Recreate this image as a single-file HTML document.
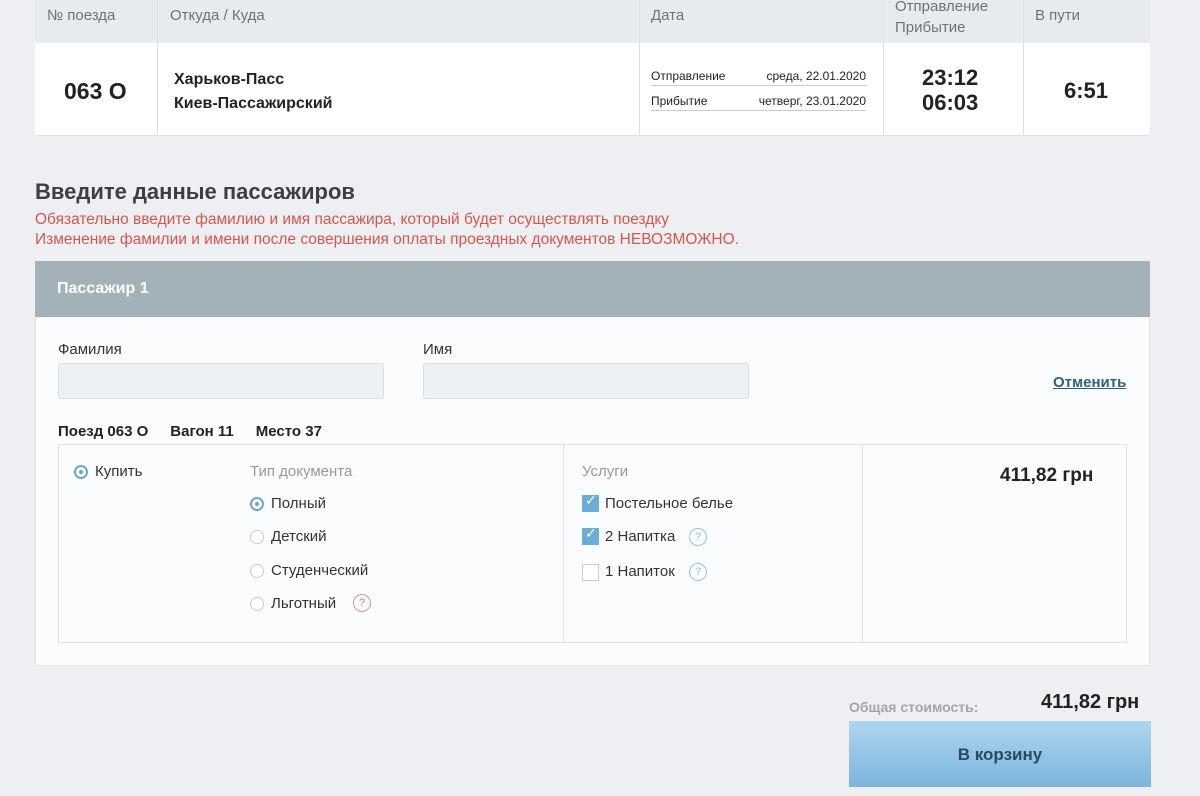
<!DOCTYPE html>
<html><head><meta charset="utf-8"><style>
*{margin:0;padding:0;box-sizing:border-box}
body{width:1200px;height:796px;background:#edeff2;font-family:"Liberation Sans",sans-serif;position:relative;overflow:hidden;color:#222}
.a{position:absolute;white-space:nowrap}
.hd{color:#6c7378;font-size:15px}
.b{font-weight:bold}
.rad{position:absolute;width:14px;height:14px;border-radius:50%;border:1.5px solid #c8cdd0;background:#fff}
.rad.on{border:2px solid #6aa7c9}
.rad.on::after{content:"";position:absolute;left:3px;top:3px;width:4px;height:4px;border-radius:50%;background:#6aa7c9}
.chk{position:absolute;width:17px;height:17px;background:#6aaed6}
.chk.off{background:#fff;border:1.5px solid #c8cdd0}
.q{position:absolute;width:18px;height:18px;border-radius:50%;border:1px solid #8fc6df;color:#8fc6df;font-size:11px;text-align:center;line-height:16px}
.t{font-size:15px;color:#333}
</style></head><body>
<div class="a" style="left:35px;top:0;width:1115px;height:43px;background:#e8ebee"></div>
<div class="a" style="left:35px;top:43px;width:1115px;height:93px;background:#fff;border-bottom:1px solid #dfe2e5"></div>
<div class="a" style="left:157px;top:0;width:1px;height:136px;background:#dde1e4"></div>
<div class="a" style="left:639px;top:0;width:1px;height:136px;background:#dde1e4"></div>
<div class="a" style="left:883px;top:0;width:1px;height:136px;background:#dde1e4"></div>
<div class="a" style="left:1023px;top:0;width:1px;height:136px;background:#dde1e4"></div>
<div class="a hd" style="left:47px;top:7px">№ поезда</div>
<div class="a hd" style="left:170px;top:7px">Откуда / Куда</div>
<div class="a hd" style="left:651px;top:7px">Дата</div>
<div class="a hd" style="left:895px;top:-4px;line-height:21px">Отправление<br>Прибытие</div>
<div class="a hd" style="left:1035px;top:7px">В пути</div>
<div class="a b" style="left:64px;top:78px;font-size:23px">063 О</div>
<div class="a b" style="left:174px;top:68px;font-size:16px;line-height:24px">Харьков-Пасс<br>Киев-Пассажирский</div>
<div class="a" style="left:651px;top:69px;width:215px;font-size:12px;border-bottom:1px solid #ccc;padding-bottom:2px">Отправление<span style="float:right">среда, 22.01.2020</span></div>
<div class="a" style="left:651px;top:94px;width:215px;font-size:12px;border-bottom:1px solid #ccc;padding-bottom:2px">Прибытие<span style="float:right">четверг, 23.01.2020</span></div>
<div class="a b" style="left:922px;top:65px;font-size:22px;line-height:25px">23:12<br>06:03</div>
<div class="a b" style="left:1064px;top:78px;font-size:22px">6:51</div>

<div class="a b" style="left:35px;top:179px;font-size:22px;color:#3a3f44">Введите данные пассажиров</div>
<div class="a" style="left:35px;top:210px;font-size:15.5px;color:#d4574a;line-height:20px">Обязательно введите фамилию и имя пассажира, который будет осуществлять поездку<br>Изменение фамилии и имени после совершения оплаты проездных документов НЕВОЗМОЖНО.</div>

<div class="a" style="left:35px;top:261px;width:1115px;height:56px;background:#a3b1b9"></div>
<div class="a b" style="left:57px;top:280px;font-size:16px;color:#fff">Пассажир 1</div>
<div class="a" style="left:35px;top:317px;width:1115px;height:349px;background:#fbfcfd;border:1px solid #e2e5e8;border-top:none"></div>
<div class="a t" style="left:58px;top:341px">Фамилия</div>
<div class="a t" style="left:423px;top:341px">Имя</div>
<div class="a" style="left:58px;top:363px;width:326px;height:36px;background:#eef1f3;border:1px solid #d9dee1;border-radius:3px"></div>
<div class="a" style="left:423px;top:363px;width:326px;height:36px;background:#eef1f3;border:1px solid #d9dee1;border-radius:3px"></div>
<div class="a b" style="left:1053px;top:374px;font-size:15px;color:#2e6180;text-decoration:underline">Отменить</div>
<div class="a b" style="left:58px;top:423px;font-size:15px">Поезд 063 О<span style="margin-left:22px">Вагон 11</span><span style="margin-left:22px">Место 37</span></div>

<div class="a" style="left:58px;top:444px;width:1069px;height:199px;border:1px solid #dfe2e5"></div>
<div class="a" style="left:563px;top:445px;width:1px;height:197px;background:#e2e5e8"></div>
<div class="a" style="left:862px;top:445px;width:1px;height:197px;background:#e2e5e8"></div>

<div class="rad on" style="left:74px;top:465px"></div><div class="a t" style="left:95px;top:463px">Купить</div>
<div class="a t" style="left:250px;top:463px;color:#999">Тип документа</div>
<div class="rad on" style="left:250px;top:497px"></div><div class="a t" style="left:271px;top:495px">Полный</div>
<div class="rad" style="left:250px;top:530px"></div><div class="a t" style="left:271px;top:528px">Детский</div>
<div class="rad" style="left:250px;top:564px"></div><div class="a t" style="left:271px;top:562px">Студенческий</div>
<div class="rad" style="left:250px;top:597px"></div><div class="a t" style="left:271px;top:595px">Льготный</div>
<div class="q" style="left:353px;top:594px;border-color:#d49a8c;color:#c7826f">?</div>

<div class="a t" style="left:582px;top:463px;color:#999">Услуги</div>
<div class="chk" style="left:582px;top:495px"></div><div class="a" style="left:585px;top:492px;color:#fff;font-size:14px">✓</div><div class="a t" style="left:605px;top:495px">Постельное белье</div>
<div class="chk" style="left:582px;top:528px"></div><div class="a" style="left:585px;top:525px;color:#fff;font-size:14px">✓</div><div class="a t" style="left:605px;top:528px">2 Напитка</div>
<div class="q" style="left:689px;top:528px">?</div>
<div class="chk off" style="left:582px;top:564px"></div><div class="a t" style="left:605px;top:563px">1 Напиток</div>
<div class="q" style="left:689px;top:563px">?</div>
<div class="a b" style="left:1000px;top:465px;font-size:19px">411,82 грн</div>

<div class="a b" style="left:849px;top:699px;font-size:14px;color:#a3a7ab">Общая стоимость:</div>
<div class="a b" style="left:1041px;top:691px;font-size:20px">411,82 грн</div>
<div class="a b" style="left:849px;top:721px;width:302px;height:66px;background:linear-gradient(#acd6ef,#7db4dc);text-align:center;line-height:68px;font-size:17px;color:#2a4a63">В корзину</div>
</body></html>
